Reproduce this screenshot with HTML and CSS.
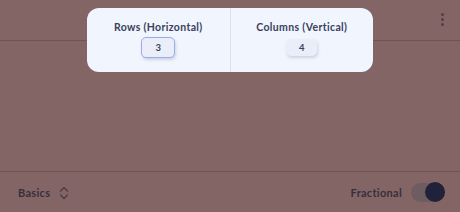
FILE: index.html
```html
<!DOCTYPE html>
<html lang="en">
<head>
    <meta charset="UTF-8">
    <title>Grid</title>
    <link rel="stylesheet" href="styles.css">
</head>
<body>
    <div class="app">
        <div class="topbar">
            <span class="kebab"><i></i><i></i><i></i></span>
        </div>
        <div class="canvas"></div>
        <div class="bottombar">
            <div class="mode">
                <span>Basics</span>
                <svg width="10" height="14" viewBox="0 0 10 14">
                    <path d="M1.5 5 L5 1.5 L8.5 5 M1.5 9 L5 12.5 L8.5 9" fill="none" stroke="#4a3e46" stroke-width="1.3" stroke-linecap="round" stroke-linejoin="round"/>
                </svg>
            </div>
            <div class="fraction">
                <span>Fractional</span>
                <span class="toggle"><i></i></span>
            </div>
        </div>

        <div class="popover">
            <div class="field">
                <label>Rows (Horizontal)</label>
                <div class="num active">3</div>
            </div>
            <div class="field">
                <label>Columns (Vertical)</label>
                <div class="num">4</div>
            </div>
        </div>
    </div>
</body>
</html>
```

FILE: styles.css
```css
body {
    margin: 0;
    font-family: Lato, "Noto Sans", sans-serif;
    background-color: #846566;
}

.app {
    position: relative;
    width: 460px;
    height: 212px;
    display: flex;
    flex-direction: column;
}

.topbar {
    height: 41px;
    box-sizing: border-box;
    border-bottom: 1px solid #6f5456;
    display: flex;
    justify-content: flex-end;
    align-items: center;
    padding-right: 16px;
}

.kebab {
    display: flex;
    flex-direction: column;
    gap: 2px;
    margin-top: -2px;
}

.kebab i {
    width: 3px;
    height: 3px;
    border-radius: 50%;
    background-color: #4f3f46;
}

.canvas {
    flex: 1;
}

.bottombar {
    height: 41px;
    box-sizing: border-box;
    border-top: 1px solid #6f5456;
    display: flex;
    justify-content: space-between;
    align-items: center;
    padding: 0 15px 0 18px;
    font-size: 11px;
    font-weight: 700;
    letter-spacing: 0.3px;
    color: #36303a;
}

.mode {
    display: flex;
    align-items: center;
    gap: 9px;
}

.mode svg {
    margin-top: 1px;
}

.fraction {
    display: flex;
    align-items: center;
    gap: 9px;
}

.toggle {
    width: 34px;
    height: 19px;
    border-radius: 10px;
    background-color: #6d5c62;
    position: relative;
}

.toggle i {
    position: absolute;
    right: 0;
    top: -0.5px;
    width: 20px;
    height: 20px;
    border-radius: 50%;
    background-color: #22213a;
}

.popover {
    position: absolute;
    left: 87px;
    top: 8px;
    width: 286px;
    height: 64px;
    background-color: #f1f5fd;
    border-radius: 12px;
    display: flex;
}

.field {
    flex: 1;
    display: flex;
    flex-direction: column;
    align-items: center;
    padding-top: 13px;
}

.field + .field {
    border-left: 1px solid #dbe2ef;
}

.field label {
    font-size: 10.5px;
    font-weight: 700;
    color: #39405e;
    letter-spacing: 0.35px;
}

.num {
    margin-top: 6px;
    width: 31px;
    height: 17px;
    border-radius: 5px;
    background-color: #e9eef8;
    box-shadow: 1px 2px 3px rgba(140, 150, 180, 0.35);
    font-size: 9.5px;
    font-weight: 700;
    color: #3a4160;
    display: flex;
    align-items: center;
    justify-content: center;
}

.num.active {
    margin-top: 4px;
    width: 32px;
    height: 19px;
    border: 1px solid #9eaaf0;
}
```
